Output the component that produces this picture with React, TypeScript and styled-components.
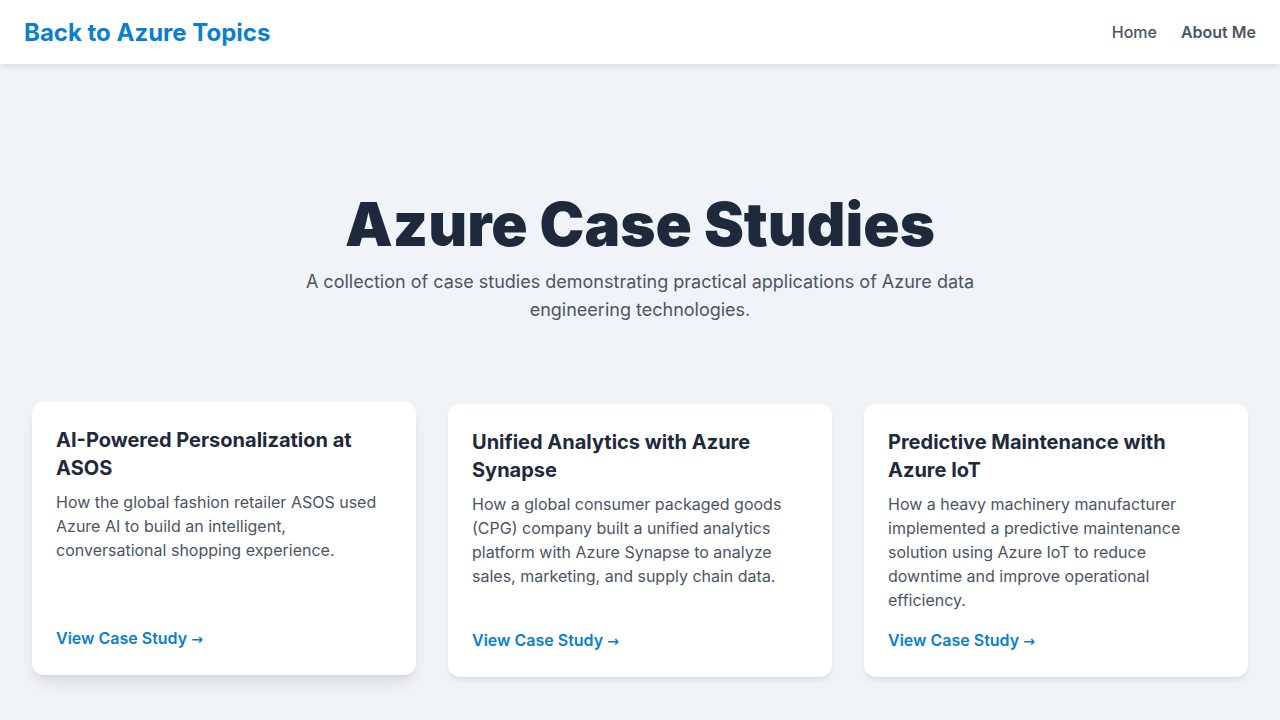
import React from "react";
import styled, { createGlobalStyle } from "styled-components";

const GlobalStyle = createGlobalStyle`
  * { box-sizing: border-box; }
  html, body { margin: 0; padding: 0; }
  body {
    background: #f0f4f8;
    font-family: Inter, "Noto Sans", sans-serif;
    color: #1e293b;
    -webkit-font-smoothing: antialiased;
  }
  a { text-decoration: none; }
`;

const Header = styled.header`
  height: 64px;
  background: #ffffff;
  box-shadow: 0 2px 6px rgba(15, 23, 42, 0.12);
  display: flex;
  align-items: center;
  justify-content: space-between;
  padding: 0 24px;
  position: relative;
  z-index: 1;
`;

const Brand = styled.a`
  font-size: 24px;
  font-weight: 700;
  color: #0a7fcf;
`;

const Nav = styled.nav`
  display: flex;
  gap: 24px;
`;

const NavLink = styled.a<{ $strong?: boolean }>`
  font-size: 16px;
  font-weight: ${(p) => (p.$strong ? 600 : 500)};
  color: #4b5563;
`;

const Main = styled.main`
  max-width: 1280px;
  margin: 0 auto;
  padding: 0 32px 48px;
`;

const Hero = styled.section`
  padding-top: 130px;
  padding-bottom: 80px;
  text-align: center;
`;

const Title = styled.h1`
  margin: 0 0 14px;
  font-size: 60px;
  line-height: 1;
  font-weight: 900;
  letter-spacing: 0;
  color: #1e293b;
`;

const Subtitle = styled.p`
  margin: 0 auto;
  max-width: 672px;
  font-size: 18px;
  line-height: 28px;
  color: #4b5563;
`;

const Grid = styled.div`
  display: grid;
  grid-template-columns: repeat(3, 1fr);
  gap: 32px;
  align-items: stretch;
`;

const Card = styled.article<{ $raised?: boolean }>`
  background: #ffffff;
  border-radius: 12px;
  padding: 24px;
  display: flex;
  flex-direction: column;
  transform: translateY(${(p) => (p.$raised ? "-2px" : "0")});
  box-shadow: ${(p) =>
    p.$raised
      ? "0 10px 15px -3px rgba(15,23,42,0.1), 0 4px 6px -4px rgba(15,23,42,0.1)"
      : "0 4px 6px -1px rgba(15,23,42,0.08), 0 2px 4px -2px rgba(15,23,42,0.08)"};
`;

const CardTitle = styled.h2`
  margin: 0 0 8px;
  font-size: 20px;
  line-height: 28px;
  font-weight: 700;
  color: #1e293b;
`;

const CardText = styled.p`
  margin: 0 0 16px;
  font-size: 16px;
  line-height: 24px;
  color: #4b5563;
`;

const CardLink = styled.a`
  margin-top: auto;
  font-size: 16px;
  line-height: 24px;
  font-weight: 600;
  color: #0a7fcf;
`;

const Arrow = styled.span`
  font-family: "DejaVu Sans", sans-serif;
  font-weight: 700;
  font-size: 14px;
`;

const studies = [
  {
    title: "AI-Powered Personalization at ASOS",
    text: "How the global fashion retailer ASOS used Azure AI to build an intelligent, conversational shopping experience.",
    raised: true,
  },
  {
    title: "Unified Analytics with Azure Synapse",
    text: "How a global consumer packaged goods (CPG) company built a unified analytics platform with Azure Synapse to analyze sales, marketing, and supply chain data.",
  },
  {
    title: "Predictive Maintenance with Azure IoT",
    text: "How a heavy machinery manufacturer implemented a predictive maintenance solution using Azure IoT to reduce downtime and improve operational efficiency.",
  },
];

export default function App() {
  return (
    <>
      <GlobalStyle />
      <Header>
        <Brand href="#">Back to Azure Topics</Brand>
        <Nav>
          <NavLink href="#">Home</NavLink>
          <NavLink href="#" $strong>
            About Me
          </NavLink>
        </Nav>
      </Header>
      <Main>
        <Hero>
          <Title>Azure Case Studies</Title>
          <Subtitle>
            A collection of case studies demonstrating practical applications of Azure data
            engineering technologies.
          </Subtitle>
        </Hero>
        <Grid>
          {studies.map((s) => (
            <Card key={s.title} $raised={s.raised}>
              <CardTitle>{s.title}</CardTitle>
              <CardText>{s.text}</CardText>
              <CardLink href="#">
                View Case Study <Arrow>→</Arrow>
              </CardLink>
            </Card>
          ))}
        </Grid>
      </Main>
    </>
  );
}
